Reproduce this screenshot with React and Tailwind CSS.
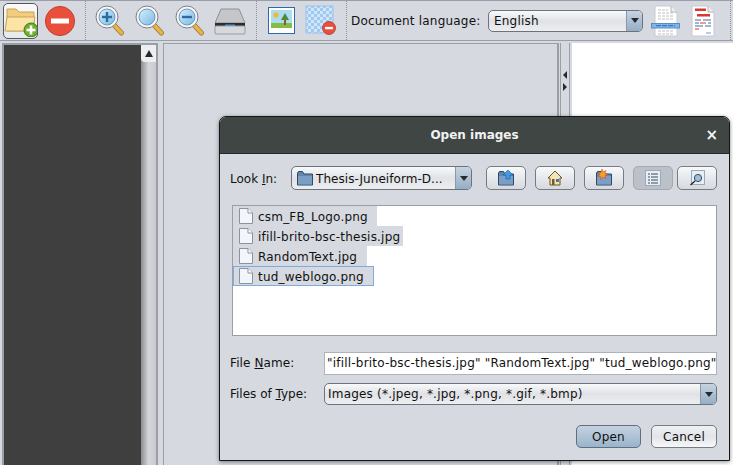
import React from "react";

const Sep = ({ mr = "" }) => (
  <div className={`h-[39px] w-0 border-l border-dotted border-[#8e939c] ${mr}`} />
);

const Magnifier = ({ sign }) => (
  <svg width="32" height="32" viewBox="0 0 32 32">
    <defs>
      <linearGradient id="lens" x1="0" y1="0" x2="1" y2="1">
        <stop offset="0" stopColor="#d8effc" />
        <stop offset="1" stopColor="#78b8e6" />
      </linearGradient>
    </defs>
    <path d="M20 20L27.5 28" stroke="#8a7a50" strokeWidth="5" strokeLinecap="round" />
    <path d="M20.5 20.5L27.5 28" stroke="#f2b23c" strokeWidth="3.4" strokeLinecap="round" />
    <circle cx="13" cy="12" r="11" fill="#f6f6f8" stroke="#7c8084" strokeWidth="1" />
    <circle cx="13" cy="12" r="8" fill="url(#lens)" stroke="#5a88ae" strokeWidth="0.8" />
    {sign !== "none" && <rect x="8" y="10.8" width="10" height="2.4" fill="#2d6d9e" />}
    {sign === "plus" && <rect x="11.8" y="7" width="2.4" height="10" fill="#2d6d9e" />}
  </svg>
);

const MinusBadge = ({ cx, cy, r }) => (
  <g>
    <circle cx={cx} cy={cy} r={r} fill="#e8503c" stroke="#b23a2c" strokeWidth="0.8" />
    <rect x={cx - r * 0.6} y={cy - r * 0.17} width={r * 1.2} height={r * 0.36} fill="#fff" />
  </g>
);

const DocIcon = ({ red }) => (
  <svg width="30" height="32" viewBox="0 0 30 32">
    <path d="M4 1H20L26 7V31H4Z" fill="#fff" stroke="#c8cacc" />
    <path d="M20 1V7H26" fill="#eef0f2" stroke="#b0b2b6" />
    {red ? (
      <g>
        <rect x="7" y="3.5" width="11" height="2.5" fill="#d8392e" />
        <rect x="9" y="9" width="13" height="2.5" fill="#d8392e" />
        <path d="M7 15h6M15 15h8M7 18h4M20 18h3M7 21h8M17 21h6" stroke="#3c6ea0" strokeWidth="1" />
        <path d="M12 18h6M7 24h4" stroke="#d8392e" strokeWidth="1" />
        <path d="M18 28h5" stroke="#6a9cc8" strokeWidth="1" />
      </g>
    ) : (
      <g stroke="#bcbec0" strokeWidth="1">
        <path d="M7 5h10M7 8h16M7 11h16M7 14h16M7 26h16M7 29h16" strokeDasharray="3 1" />
      </g>
    )}
    {!red && <rect x="0.5" y="18.5" width="28" height="4.5" fill="#7cb6ec" stroke="#5a8cc0" />}
    {!red && <path d="M5 20.7h19" stroke="#2f6aa8" strokeWidth="1" strokeDasharray="5 1" />}
  </svg>
);

const Combo = ({ className, children }) => (
  <div className={`flex items-stretch rounded-[5px] border border-[#6d727c] bg-gradient-to-b from-[#f8f9fa] via-[#e0e2e6] to-[#eceef0] overflow-hidden ${className}`}>
    <div className="flex-1 flex items-center min-w-0">{children}</div>
    <div className="w-[16px] flex items-center justify-center border-l border-[#8d98a6] bg-gradient-to-b from-[#c6d3e0] to-[#95aec6]">
      <div className="w-0 h-0 border-l-[4px] border-r-[4px] border-t-[5px] border-l-transparent border-r-transparent border-t-[#27292c]" />
    </div>
  </div>
);

const FileGlyph = () => (
  <svg width="14" height="16" viewBox="0 0 14 16" className="shrink-0">
    <path d="M0.5 0.5H9L13.5 5V15.5H0.5Z" fill="#f2f6fa" stroke="#8d939c" />
    <path d="M9 0.5V5H13.5" fill="#fff" stroke="#8d939c" />
  </svg>
);

const FolderGlyph = ({ badge }) => (
  <svg width="18" height="18" viewBox="0 0 18 18">
    <path d="M1.5 4V16H16.5V5H8L6.5 2.5H2.5Z" fill="#5f86ac" stroke="#2e4a66" />
    <path d="M2 7H16V15.5H2Z" fill="#7b9fc4" />
    {badge === "up" && <path d="M11 1L16 6H13V10H9V6H6Z" fill="#3f9ae8" stroke="#1e5a94" strokeWidth="0.6" />}
    {badge === "new" && <path d="M7 0L8.3 3L11 1.5L10 4.5L13 5L10 6.5L11 9.5L8 8L6 10.5L5.5 7.5L2.5 7.5L5 5.5L3 3L6 3.5Z" fill="#f4a21c" stroke="#d8392e" strokeWidth="0.5" />}
  </svg>
);

const ToolBtn = ({ active, children }) => (
  <div className={`w-10 h-6 flex items-center justify-center rounded-[5px] border ${active ? "bg-[#bcc0c8] border-[#a4a8b0]" : "bg-gradient-to-b from-[#f8f9fa] via-[#e6e8ec] to-[#d6d9de] border-[#767b84]"}`}>
    {children}
  </div>
);

const rows = [
  ["csm_FB_Logo.png", "w-[144px]"],
  ["ifill-brito-bsc-thesis.jpg", "w-[170px]"],
  ["RandomText.jpg", "w-[134px]"],
];

export default function App() {
  return (
    <div
      className="relative w-[733px] h-[465px] overflow-hidden bg-[#d6d9e0] text-[#111] text-[12px] border-t border-[#9a9ea8]"
      style={{ fontFamily: '"DejaVu Sans", sans-serif' }}
    >
      {/* Toolbar */}
      <div className="h-[39px] flex items-center border-b border-[#9a9ea6] box-content">
        <div className="ml-[3px] w-[35px] h-[36px] shrink-0 rounded-[5px] border border-[#55585c] bg-gradient-to-b from-[#fafafa] to-[#e8e9ec] flex items-center justify-center">
          <svg width="33" height="32" viewBox="0 0 33 32">
            <path d="M3 4H12L15 7H30V26H3Z" fill="#f2ce7c" stroke="#c6a458" />
            <path d="M3 12H31L28 26H1Z" fill="#fbe4a6" stroke="#c6a458" />
            <circle cx="27" cy="25" r="7" fill="#6cb02c" stroke="#3f7a18" />
            <rect x="22.5" y="23.7" width="9" height="2.6" fill="#fff" />
            <rect x="25.7" y="20.5" width="2.6" height="9" fill="#fff" />
          </svg>
        </div>
        <svg width="32" height="32" viewBox="0 0 32 32" className="ml-[6px] shrink-0">
          <circle cx="16" cy="16" r="14.6" fill="#e8503c" stroke="#c2402e" />
          <rect x="7" y="13.5" width="18" height="5" fill="#fff" />
        </svg>
        <div className="w-[9px] shrink-0" />
        <Sep mr="mr-[8px]" />
        <Magnifier sign="plus" />
        <div className="w-[8px]" />
        <Magnifier sign="none" />
        <div className="w-[8px]" />
        <Magnifier sign="minus" />
        <svg width="32" height="32" viewBox="0 0 32 32" className="ml-[8px] shrink-0">
          <path d="M7 4H25L31 18H1Z" fill="#c4c6c8" stroke="#8e9094" />
          <rect x="1" y="18" width="30" height="4" fill="#2a2c30" />
          <rect x="11" y="19.5" width="10" height="2" fill="#3f8fd8" />
          <rect x="1" y="21" width="30" height="8" rx="1" fill="#d6d8dc" stroke="#9a9ca0" />
        </svg>
        <div className="w-[10px] shrink-0" />
        <Sep mr="mr-[11px]" />
        <svg width="28" height="28" viewBox="0 0 28 28" className="shrink-0">
          <rect x="0.5" y="0.5" width="26" height="26" fill="#fff" stroke="#2f6aa8" />
          <rect x="3" y="3" width="21" height="18" fill="#aadcf2" />
          <rect x="3" y="16" width="21" height="5" fill="#86bc44" />
          <circle cx="8" cy="8" r="2.6" fill="#f2b92c" />
          <path d="M17 6L21 13H13Z" fill="#4f8a3a" />
          <rect x="16" y="13" width="2" height="5" fill="#8a5a2c" />
        </svg>
        <svg width="32" height="32" viewBox="0 0 32 32" className="ml-[9px] shrink-0">
          <defs>
            <pattern id="chk" width="6" height="6" patternUnits="userSpaceOnUse">
              <rect width="6" height="6" fill="#d2e6f8" />
              <rect width="3" height="3" fill="#9ccaf4" />
              <rect x="3" y="3" width="3" height="3" fill="#9ccaf4" />
            </pattern>
          </defs>
          <rect x="1" y="1" width="27" height="27" fill="url(#chk)" stroke="#9cc4e8" />
          <MinusBadge cx={24} cy={23} r={6.5} />
        </svg>
        <div className="w-[9px] shrink-0" />
        <Sep mr="mr-[4px]" />
        <span className="w-[137px] shrink-0 whitespace-nowrap tracking-[0.2px] pt-[1px]">Document language:</span>
        <Combo className="w-[155px] shrink-0 h-[22px]">
          <span className="pl-[5px] tracking-[0.2px] pt-[1px]">English</span>
        </Combo>
        <div className="ml-[8px] shrink-0"><DocIcon /></div>
        <div className="ml-[7px] shrink-0"><DocIcon red /></div>
        <div className="w-[12px] shrink-0" />
        <Sep />
      </div>

      {/* Main area */}
      <div className="flex h-[424px] pt-[2px]">
        <div className="ml-[2px] w-[156px] shrink-0 border-2 border-b-0 border-[#9a9ea6] flex">
          <div className="flex-1 bg-[#3f3f3f]" />
          <div className="w-[15px] bg-gradient-to-r from-[#8c8e92] via-[#d4d6da] to-[#c8cad0] flex flex-col">
            <div className="h-[17px] bg-[#eceef0] flex items-center justify-center rounded-bl-sm">
              <div className="w-0 h-0 border-l-[4px] border-r-[4px] border-b-[7px] border-l-transparent border-r-transparent border-b-[#27292c]" />
            </div>
          </div>
        </div>
        <div className="ml-[5px] w-[396px] shrink-0 border border-b-0 border-[#9a9ea6] border-r-2" />
        <div className="w-[10px] shrink-0 ml-[1px] flex flex-col items-center pt-[28px] gap-[4px] border-x border-[#9a9ea6]">
          <div className="w-0 h-0 border-y-[4px] border-r-[4px] border-y-transparent border-r-[#27292c]" />
          <div className="w-0 h-0 border-y-[4px] border-l-[4px] border-y-transparent border-l-[#27292c]" />
        </div>
        <div className="flex-1 ml-[2px] bg-white" />
      </div>

      {/* Dialog */}
      <div className="absolute left-[219px] top-[115px] w-[511px] h-[345px] rounded-t-[7px] border border-[#141618] bg-[#d6d9e0] shadow-[0_1px_4px_rgba(0,0,0,0.45)] flex flex-col">
        <div className="relative h-[37px] shrink-0 rounded-t-[6px] bg-[#3f4644] flex items-center justify-center text-[#f2f2f2] text-[12px] font-bold border-b border-[#26292a]">
          Open images
          <span className="absolute right-[11px] top-[9px] text-[#f4f4f4] text-[15px] font-bold leading-[18px]">×</span>
        </div>
        <div className="flex-1 px-[12px] pt-[12px] flex flex-col">
          <div className="flex items-center h-[24px] -ml-[2px]">
            <span className="w-[61px] shrink-0 pt-[1px]">Look <u>I</u>n:</span>
            <Combo className="w-[181px] shrink-0 h-[24px]">
              <span className="pl-[4px] mr-[2px]"><FolderGlyph /></span>
              <span className="whitespace-nowrap tracking-[0.05px] pt-[1px]">Thesis-Juneiform-D...</span>
            </Combo>
            <div className="ml-[14px]"><ToolBtn><FolderGlyph badge="up" /></ToolBtn></div>
            <div className="ml-[9px]">
              <ToolBtn>
                <svg width="16" height="16" viewBox="0 0 16 16">
                  <path d="M8 1L15 8H13V15H3V8H1Z" fill="#f3e4b8" stroke="#6a5420" />
                  <rect x="9" y="9" width="3" height="3" fill="#3f78b0" />
                  <rect x="5" y="9" width="2.5" height="6" fill="#7a5a28" />
                </svg>
              </ToolBtn>
            </div>
            <div className="ml-[9px]"><ToolBtn><FolderGlyph badge="new" /></ToolBtn></div>
            <div className="ml-[9px]">
              <ToolBtn active>
                <svg width="16" height="16" viewBox="0 0 16 16">
                  <rect x="0.5" y="0.5" width="15" height="15" fill="#e6eef6" stroke="#9aaabc" />
                  <path d="M3 4h2M6 4h7M3 7h2M6 7h7M3 10h2M6 10h7M3 13h2M6 13h7" stroke="#3c4a5a" />
                </svg>
              </ToolBtn>
            </div>
            <div className="ml-[4px]">
              <ToolBtn>
                <svg width="16" height="16" viewBox="0 0 16 16">
                  <rect x="2.5" y="0.5" width="13" height="14" fill="#e6eef6" stroke="#9aaabc" />
                  <circle cx="9" cy="8" r="3.6" fill="#9cc0dc" stroke="#3c4a5a" />
                  <path d="M6 11L1.5 15" stroke="#222" strokeWidth="1.4" />
                </svg>
              </ToolBtn>
            </div>
          </div>

          <div className="mt-[15px] h-[131px] border border-[#9a9ea6] bg-white shrink-0 tracking-[0.2px]">
            {rows.map(([name, w]) => (
              <div key={name} className={`h-[20px] ${w} flex items-center bg-[#d6d9e0] pl-[6px] gap-[5px]`}>
                <FileGlyph />
                <span className="whitespace-nowrap pt-[1px]">{name}</span>
              </div>
            ))}
            <div className="h-[20px] w-[141px] flex items-center bg-[#d6d9e0] pl-[5px] gap-[5px] border border-[#7cace0]">
              <FileGlyph />
              <span className="whitespace-nowrap pt-[1px]">tud_weblogo.png</span>
            </div>
          </div>

          <div className="mt-[15px] flex items-center h-[24px] -ml-[2px]">
            <span className="w-[94px] shrink-0 tracking-[0.1px]">File <u>N</u>ame:</span>
            <div className="flex-1 min-w-0 h-[23px] border border-[#aeb2ba] bg-white flex items-center pl-[2px] whitespace-nowrap overflow-hidden tracking-[0.2px]">
              "ifill-brito-bsc-thesis.jpg" "RandomText.jpg" "tud_weblogo.png"
            </div>
          </div>
          <div className="mt-[8px] flex items-center h-[22px] -ml-[2px]">
            <span className="w-[94px] shrink-0">Files of <u>T</u>ype:</span>
            <Combo className="flex-1 h-[22px]">
              <span className="pl-[3px] whitespace-nowrap tracking-[0.2px]">Images (*.jpeg, *.jpg, *.png, *.gif, *.bmp)</span>
            </Combo>
          </div>

          <div className="mt-[20px] flex justify-end gap-[10px] tracking-[0.2px]">
            <div className="w-[65px] h-[23px] rounded-[5px] border border-[#5f6f80] bg-gradient-to-b from-[#c4d2e0] to-[#9ab4cc] flex items-center justify-center">Open</div>
            <div className="w-[66px] h-[23px] rounded-[5px] border border-[#767b84] bg-gradient-to-b from-[#f0f1f3] via-[#e2e4e8] to-[#f6f7f8] flex items-center justify-center">Cancel</div>
          </div>
        </div>
      </div>
    </div>
  );
}
